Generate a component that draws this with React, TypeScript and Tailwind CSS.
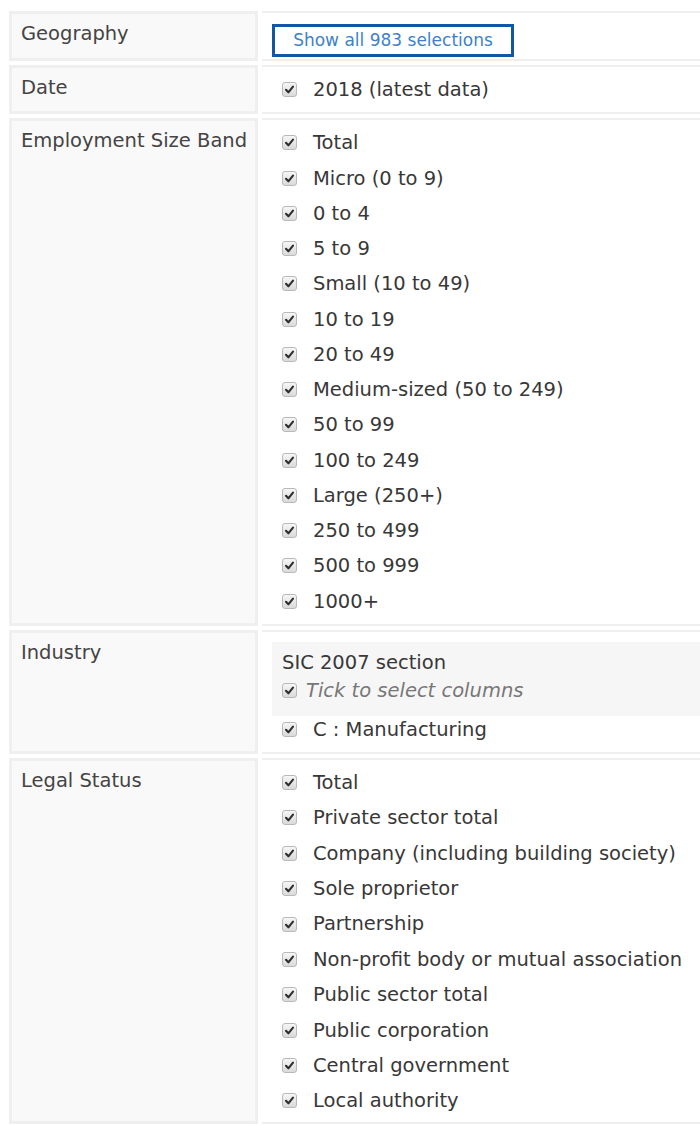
import React from "react";

const sizeBands = [
  "Total",
  "Micro (0 to 9)",
  "0 to 4",
  "5 to 9",
  "Small (10 to 49)",
  "10 to 19",
  "20 to 49",
  "Medium-sized (50 to 249)",
  "50 to 99",
  "100 to 249",
  "Large (250+)",
  "250 to 499",
  "500 to 999",
  "1000+",
];

const legalStatus = [
  "Total",
  "Private sector total",
  "Company (including building society)",
  "Sole proprietor",
  "Partnership",
  "Non-profit body or mutual association",
  "Public sector total",
  "Public corporation",
  "Central government",
  "Local authority",
];

function Tick() {
  return (
    <span className="inline-flex items-center justify-center w-[15px] h-[15px] shrink-0 rounded-[3px] border border-[#b9b9b9] bg-gradient-to-b from-[#f6f6f6] to-[#dadada]">
      <svg width="11" height="11" viewBox="0 0 11 11">
        <path d="M2 5.8 L4.4 8.3 L9 2.6" fill="none" stroke="#2e2e2e" strokeWidth="2.1" strokeLinecap="round" strokeLinejoin="round" />
      </svg>
    </span>
  );
}

function Item({ label, tall }: { label: string; tall?: boolean }) {
  return (
    <div className={`flex items-center pl-[20px] ${tall ? "h-[35.4px]" : "h-[35.25px]"}`}>
      <Tick />
      <span className="ml-[16px] whitespace-nowrap">{label}</span>
    </div>
  );
}

function Row({ label, children, className = "" }: { label: string; children: React.ReactNode; className?: string }) {
  return (
    <div className="flex gap-[4px]">
      <div className="w-[249px] shrink-0 border-[3px] border-[#efefef] bg-[#f9f9f9] pl-[9px] pt-[8px] leading-[24px] text-[#444]">
        {label}
      </div>
      <div className={`flex-1 border-y-2 border-[#efefef] ${className}`}>{children}</div>
    </div>
  );
}

export default function App() {
  return (
    <div
      className="min-h-[1125px] bg-white pl-[9px] pt-[11px] text-[19.5px] text-[#383838]"
      style={{ fontFamily: '"DejaVu Sans", Verdana, sans-serif' }}
    >
      <div className="flex flex-col gap-[4px]">
        <Row label="Geography" className="pt-[11px] pb-[2px] pl-[10px]">
          <button className="h-[33px] w-[242px] border-[3px] border-[#1457a0] bg-white text-[17px] text-[#3d82c8]">
            Show all 983 selections
          </button>
        </Row>
        <Row label="Date" className="pt-[5px] pb-[5px]">
          <Item label="2018 (latest data)" />
        </Row>
        <Row label="Employment Size Band" className="pt-[5px] pb-[5px]">
          {sizeBands.map((b) => (
            <Item key={b} label={b} />
          ))}
        </Row>
        <Row label="Industry" className="pt-[10px] pb-[8px]">
          <div className="ml-[10px] bg-[#f6f6f6] pl-[10px] pt-[7px] pb-[11px] leading-[28px]">
            <div>SIC 2007 section</div>
            <div className="flex items-center">
              <Tick />
              <span className="ml-[9px] italic text-[#777]">Tick to select columns</span>
            </div>
          </div>
          <div className="flex items-center h-[28px] pl-[20px]">
            <Tick />
            <span className="ml-[16px]">C : Manufacturing</span>
          </div>
        </Row>
        <Row label="Legal Status" className="pt-[5px] pb-[3px]">
          {legalStatus.map((s) => (
            <Item key={s} label={s} tall />
          ))}
        </Row>
      </div>
    </div>
  );
}
